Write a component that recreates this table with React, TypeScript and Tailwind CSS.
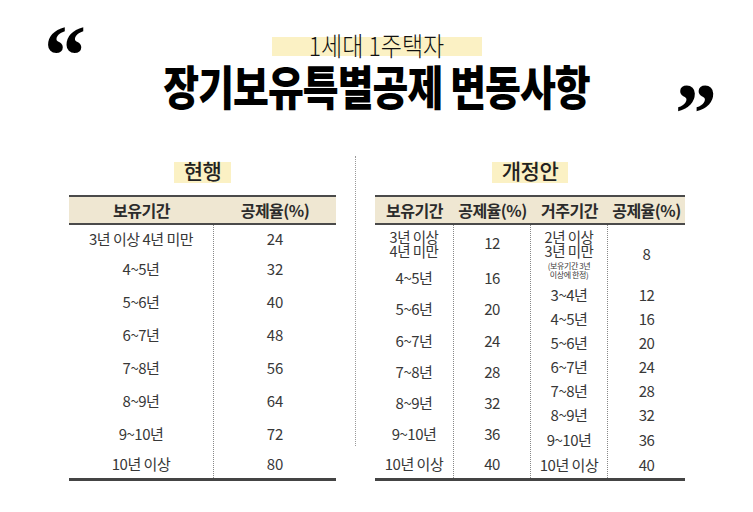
const font = { fontFamily: '"Noto Sans CJK KR", "Noto Sans", sans-serif' }

const currentRows: [string, string, string][] = [
  ["3년 이상 4년 미만", "24", "h-[28px]"],
  ["4~5년", "32", "h-[33px]"],
  ["5~6년", "40", "h-[33px]"],
  ["6~7년", "48", "h-[33px]"],
  ["7~8년", "56", "h-[33px]"],
  ["8~9년", "64", "h-[33px]"],
  ["9~10년", "72", "h-[33px]"],
  ["10년 이상", "80", "h-[27px]"],
]

const holdRows: [string, string, string][] = [
  ["4~5년", "16", "h-[32px]"],
  ["5~6년", "20", "h-[31px]"],
  ["6~7년", "24", "h-[32px]"],
  ["7~8년", "28", "h-[31px]"],
  ["8~9년", "32", "h-[31px]"],
  ["9~10년", "36", "h-[31px]"],
  ["10년 이상", "40", "h-[28px]"],
]

const liveRows: [string, string, string][] = [
  ["3~4년", "12", "h-[24px]"],
  ["4~5년", "16", "h-[24px]"],
  ["5~6년", "20", "h-[24px]"],
  ["6~7년", "24", "h-[24px]"],
  ["7~8년", "28", "h-[24px]"],
  ["8~9년", "32", "h-[25px]"],
  ["9~10년", "36", "h-[24px]"],
  ["10년 이상", "40", "h-[26px]"],
]

function HeadCell({ label, w }: { label: string; w: string }) {
  return (
    <div className={`${w} flex items-center justify-center text-[16px] font-bold tracking-[-0.5px] text-[#2b2b2b]`}>
      {label}
    </div>
  )
}

function SectionTitle({ label }: { label: string }) {
  return (
    <div className="flex justify-center h-[39px]">
      <div className="relative h-[21px] px-[10px] mt-[6px] bg-[#fbf1c4]">
        <span className="relative -top-[7px] text-[21px] font-medium text-[#222] tracking-[-0.5px]">{label}</span>
      </div>
    </div>
  )
}

export default function App() {
  return (
    <div className="w-[753px] h-[512px] bg-white overflow-hidden text-[#383838]" style={font}>
      {/* title */}
      <div className="grid grid-cols-[1fr_auto_1fr] h-[150px]">
        <div className="pl-[44px] pt-[14px]">
          <span className="block text-[84px] leading-none font-bold text-black" style={{ fontFamily: '"Liberation Serif", serif' }}>
            “
          </span>
        </div>
        <div className="flex flex-col items-center pt-[37px]">
          <div className="h-[19px] w-[210px] bg-[#fbf1c4] flex justify-center">
            <span className="relative -top-[3px] text-[23px] leading-[20px] font-light text-[#111] scale-y-[1.15]">
              1세대 1주택자
            </span>
          </div>
          <h1 className="mt-[12px] text-[39px] leading-[34px] font-black text-black tracking-[-1px] scale-y-[1.2]">
            장기보유특별공제 변동사항
          </h1>
        </div>
        <div className="flex items-start justify-end pr-[36px] pt-[72px]">
          <span className="block text-[84px] leading-none font-bold text-black" style={{ fontFamily: '"Liberation Serif", serif' }}>
            ”
          </span>
        </div>
      </div>

      <div className="flex pl-[69px] mt-[6px]">
        {/* 현행 */}
        <div className="w-[267px]">
          <SectionTitle label="현행" />
          <div className="flex h-[30px] bg-[#efe7d2] border-t-2 border-b-2 border-[#4a4a4a]">
            <HeadCell label="보유기간" w="w-[145px]" />
            <HeadCell label="공제율(%)" w="w-[122px]" />
          </div>
          <div className="flex border-b-[3px] border-[#444]">
            <div className="w-[145px] border-r border-dotted border-[#888]">
              {currentRows.map(r => (
                <div key={r[0]} className={`${r[2]} flex items-center justify-center text-[15px] tracking-[-0.5px]`}>{r[0]}</div>
              ))}
            </div>
            <div className="w-[122px]">
              {currentRows.map(r => (
                <div key={r[0]} className={`${r[2]} flex items-center justify-center text-[15px]`}>{r[1]}</div>
              ))}
            </div>
          </div>
        </div>

        {/* divider */}
        <div className="w-[39px] flex justify-center">
          <div className="h-[290px] border-l border-dotted border-[#999]" />
        </div>

        {/* 개정안 */}
        <div className="w-[310px]">
          <SectionTitle label="개정안" />
          <div className="flex h-[30px] bg-[#efe7d2] border-t-2 border-b-2 border-[#4a4a4a]">
            <HeadCell label="보유기간" w="w-[79px]" />
            <HeadCell label="공제율(%)" w="w-[77px]" />
            <HeadCell label="거주기간" w="w-[77px]" />
            <HeadCell label="공제율(%)" w="w-[77px]" />
          </div>
          <div className="flex border-b-[3px] border-[#444] text-[15px] tracking-[-0.5px]">
            <div className="w-[79px] border-r border-dotted border-[#888]">
              <div className="h-[37px] flex flex-col items-center justify-center text-[14.5px] leading-[14px]">
                <span>3년 이상</span>
                <span>4년 미만</span>
              </div>
              {holdRows.map(r => (
                <div key={r[0]} className={`${r[2]} flex items-center justify-center`}>{r[0]}</div>
              ))}
            </div>
            <div className="w-[77px] border-r border-dotted border-[#888]">
              <div className="h-[37px] flex items-center justify-center">12</div>
              {holdRows.map(r => (
                <div key={r[0]} className={`${r[2]} flex items-center justify-center`}>{r[1]}</div>
              ))}
            </div>
            <div className="w-[77px] border-r border-dotted border-[#888]">
              <div className="h-[58px] flex flex-col items-center justify-center">
                <span className="text-[14.5px] leading-[14px]">2년 이상</span>
                <span className="text-[14.5px] leading-[14px]">3년 미만</span>
                <span className="mt-[3px] text-[8px] leading-[9px] tracking-[-0.4px]">(보유기간 3년</span>
                <span className="text-[8px] leading-[9px] tracking-[-0.4px]">이상에 한정)</span>
              </div>
              {liveRows.map(r => (
                <div key={r[0]} className={`${r[2]} flex items-center justify-center`}>{r[0]}</div>
              ))}
            </div>
            <div className="w-[77px]">
              <div className="h-[58px] flex items-center justify-center">8</div>
              {liveRows.map(r => (
                <div key={r[0]} className={`${r[2]} flex items-center justify-center`}>{r[1]}</div>
              ))}
            </div>
          </div>
        </div>
      </div>
    </div>
  )
}
